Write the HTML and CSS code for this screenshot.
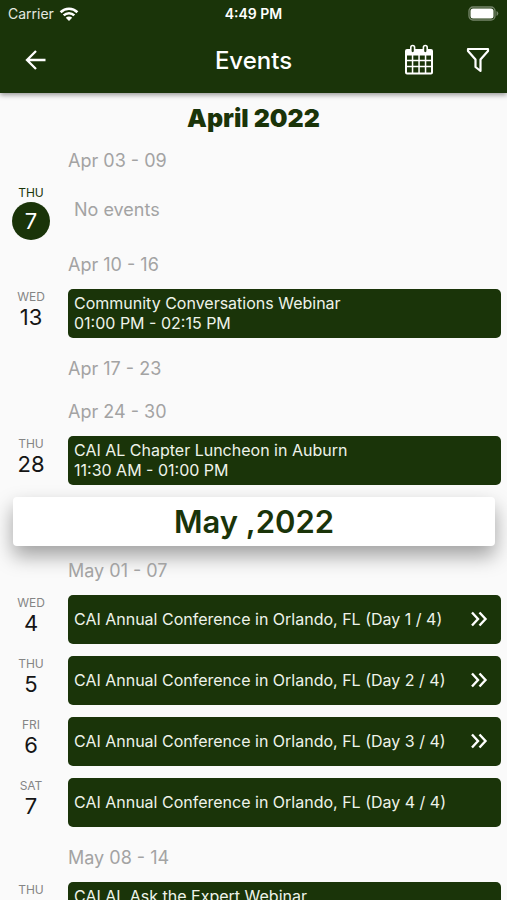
FILE: index.html
```html
<!DOCTYPE html>
<html lang="en">
<head>
<meta charset="utf-8">
<meta name="viewport" content="width=device-width, initial-scale=1">
<title>Events</title>
<link rel="stylesheet" href="styles.css">
</head>
<body>
<div class="app">
  <header class="header">
    <div class="status">
      <div class="carrier">
        <span>Carrier</span>
        <svg width="20" height="16" viewBox="0 0 20 16" aria-hidden="true">
          <g fill="none" stroke="#fff" stroke-width="2.6">
            <path d="M1.6 6.2a12 12 0 0 1 16.8 0"/>
            <path d="M4.7 9.4a7.6 7.6 0 0 1 10.6 0"/>
          </g>
          <path d="M10 15l-3.2-3.3a4.6 4.6 0 0 1 6.4 0z" fill="#fff"/>
        </svg>
      </div>
      <time class="clock">4:49 PM</time>
      <svg class="battery" width="31" height="15" viewBox="0 0 31 15" aria-hidden="true">
        <rect x="1" y="1" width="26" height="13" rx="4" fill="none" stroke="#75856a" stroke-width="1.3"/>
        <rect x="2.500" y="2.500" width="23" height="10" rx="2.500" fill="#fff"/>
        <path d="M28.500 5v5q1.800-.8 1.800-2.500t-1.800-2.500z" fill="#75856a"/>
      </svg>
    </div>
    <div class="toolbar">
      <button class="icon-button" type="button" aria-label="Back">
        <svg width="22" height="22" viewBox="0 0 22 22" fill="none" stroke="#fff" stroke-width="2.300">
          <path d="M20.500 11H2.500M11 2L2 11l9 9"/>
        </svg>
      </button>
      <h1 class="title">Events</h1>
      <div class="actions">
        <button class="icon-button" type="button" aria-label="Calendar">
          <svg width="30" height="32" viewBox="0 0 30 32">
            <path fill="#fff" fill-rule="evenodd" d="M3 5h24q2 0 2 2v21.500q0 2-2 2H3q-2 0-2-2V7q0-2 2-2zM3 11.500v4.200h4.800v-4.200zm6.300 0v4.200h5v-4.200zm6.500 0v4.200h5v-4.200zm6.500 0v4.200H27v-4.200zM3 17.200v4.600h4.800v-4.600zm6.300 0v4.600h5v-4.600zm6.500 0v4.600h5v-4.600zm6.500 0v4.600H27v-4.600zM3 23.300v5.200h4.800v-5.200zm6.300 0v5.200h5v-5.200zm6.500 0v5.200h5v-5.200zm6.500 0v5.200H27v-5.200z"/>
            <g fill="#1a3409" stroke="#fff" stroke-width="1.600">
              <rect x="6.800" y="1.500" width="3.800" height="7.500" rx="1.900"/>
              <rect x="19.400" y="1.500" width="3.800" height="7.500" rx="1.900"/>
            </g>
          </svg>
        </button>
        <button class="icon-button" type="button" aria-label="Filter">
          <svg width="24" height="26" viewBox="0 0 24 26" fill="none" stroke="#fff" stroke-width="2.200" stroke-linejoin="round">
            <path d="M2 2h20v2l-7.500 8.500v11.500l-5-4v-7.500L2 4z"/>
          </svg>
        </button>
      </div>
    </div>
  </header>

  <main class="agenda">
    <h2 class="month">April 2022</h2>

    <h3 class="week">Apr 03 - 09</h3>
    <div class="day today">
      <div class="date"><span class="weekday">THU</span><span class="number">7</span></div>
      <p class="empty">No events</p>
    </div>

    <h3 class="week">Apr 10 - 16</h3>
    <div class="day">
      <div class="date"><span class="weekday">WED</span><span class="number">13</span></div>
      <a class="event" href="#"><span>Community Conversations Webinar<br>01:00 PM - 02:15 PM</span></a>
    </div>

    <h3 class="week">Apr 17 - 23</h3>
    <h3 class="week">Apr 24 - 30</h3>
    <div class="day">
      <div class="date"><span class="weekday">THU</span><span class="number">28</span></div>
      <a class="event" href="#"><span>CAI AL Chapter Luncheon in Auburn<br>11:30 AM - 01:00 PM</span></a>
    </div>

    <h2 class="banner">May ,2022</h2>

    <h3 class="week">May 01 - 07</h3>
    <div class="day">
      <div class="date"><span class="weekday">WED</span><span class="number">4</span></div>
      <a class="event" href="#"><span>CAI Annual Conference in Orlando, FL (Day 1 / 4)</span>
        <svg class="more" width="18" height="16" viewBox="0 0 18 16" aria-hidden="true"><path d="M2 1.500L8 8l-6 6.500M9.500 1.500l6 6.500-6 6.500"/></svg></a>
    </div>
    <div class="day">
      <div class="date"><span class="weekday">THU</span><span class="number">5</span></div>
      <a class="event" href="#"><span>CAI Annual Conference in Orlando, FL (Day 2 / 4)</span>
        <svg class="more" width="18" height="16" viewBox="0 0 18 16" aria-hidden="true"><path d="M2 1.500L8 8l-6 6.500M9.500 1.500l6 6.500-6 6.500"/></svg></a>
    </div>
    <div class="day">
      <div class="date"><span class="weekday">FRI</span><span class="number">6</span></div>
      <a class="event" href="#"><span>CAI Annual Conference in Orlando, FL (Day 3 / 4)</span>
        <svg class="more" width="18" height="16" viewBox="0 0 18 16" aria-hidden="true"><path d="M2 1.500L8 8l-6 6.500M9.500 1.500l6 6.500-6 6.500"/></svg></a>
    </div>
    <div class="day">
      <div class="date"><span class="weekday">SAT</span><span class="number">7</span></div>
      <a class="event" href="#"><span>CAI Annual Conference in Orlando, FL (Day 4 / 4)</span></a>
    </div>

    <h3 class="week">May 08 - 14</h3>
    <div class="day">
      <div class="date"><span class="weekday">THU</span></div>
      <a class="event" href="#"><span>CAI AL Ask the Expert Webinar<br>&nbsp;</span></a>
    </div>
  </main>
</div>
</body>
</html>
```

FILE: styles.css
```css
:root {
  --green: #1a3409;
  --page: #fafafa;
}

* {
  box-sizing: border-box;
}

body {
  margin: 0;
  background: var(--page);
  font-family: Inter, "Liberation Sans", sans-serif;
}

h1, h2, h3, p {
  margin: 0;
}

svg {
  display: block;
}

.app {
  display: flex;
  flex-direction: column;
  height: 100vh;
}

.header {
  position: relative;
  z-index: 1;
  flex: none;
  background: var(--green);
  color: #fff;
  box-shadow: 0 2px 5px rgba(0, 0, 0, 0.4);
}

.status {
  display: grid;
  grid-template-columns: 1fr auto 1fr;
  align-items: center;
  height: 27px;
  padding: 0 8px;
  font-size: 14px;
}

.carrier {
  display: flex;
  align-items: center;
  gap: 5px;
  color: #e4e9e0;
}

.clock {
  font-weight: 600;
}

.battery {
  justify-self: end;
}

.toolbar {
  display: grid;
  grid-template-columns: 1fr auto 1fr;
  align-items: center;
  height: 66px;
  padding: 0 17px;
}

.title {
  font-size: 24px;
  font-weight: 500;
}

.actions {
  display: flex;
  align-items: center;
  justify-content: flex-end;
  gap: 32px;
}

.icon-button {
  justify-self: start;
  padding: 0;
  border: 0;
  background: none;
}

.toolbar > .icon-button {
  padding: 0 8px;
}

.agenda {
  flex: 1;
  min-height: 0;
  overflow-y: auto;
  scrollbar-width: none;
}

.month {
  height: 46px;
  padding-top: 4px;
  color: var(--green);
  font-size: 25px;
  font-weight: 900;
  line-height: 42px;
  text-align: center;
}

.week {
  padding-left: 68px;
  color: #a3a3a3;
  font-size: 18px;
  font-weight: 400;
  line-height: 43px;
}

.day {
  display: flex;
  height: 61px;
  padding: 3px 6px 9px 0;
}

.date {
  display: flex;
  flex: none;
  flex-direction: column;
  align-items: center;
  width: 68px;
  padding: 1px 6px 0 0;
}

.weekday {
  color: #858585;
  font-size: 12px;
  line-height: 14px;
}

.number {
  color: #151515;
  font-size: 22px;
  line-height: 26px;
}

.today .weekday {
  color: var(--green);
}

.today .number {
  flex: none;
  width: 38px;
  margin-top: 2px;
  border-radius: 50%;
  background: var(--green);
  color: #fff;
  line-height: 38px;
  text-align: center;
}

.event,
.empty {
  display: flex;
  flex: 1;
  align-items: center;
  justify-content: space-between;
  padding: 0 13px 0 6px;
  line-height: 20px;
}

.event {
  padding-bottom: 2px;
  border-radius: 5px;
  background: var(--green);
  color: #eef3ea;
  font-size: 16px;
  text-decoration: none;
}

.empty {
  color: #a3a3a3;
  font-size: 18px;
}

.more {
  flex: none;
  fill: none;
  stroke: #fff;
  stroke-width: 2.4;
}

.banner {
  margin: 3px 12px 3px 13px;
  border-radius: 4px;
  background: #fff;
  box-shadow: 0 10px 20px rgba(0, 0, 0, 0.36);
  color: var(--green);
  font-size: 31px;
  font-weight: 600;
  line-height: 49px;
  text-align: center;
}
```
